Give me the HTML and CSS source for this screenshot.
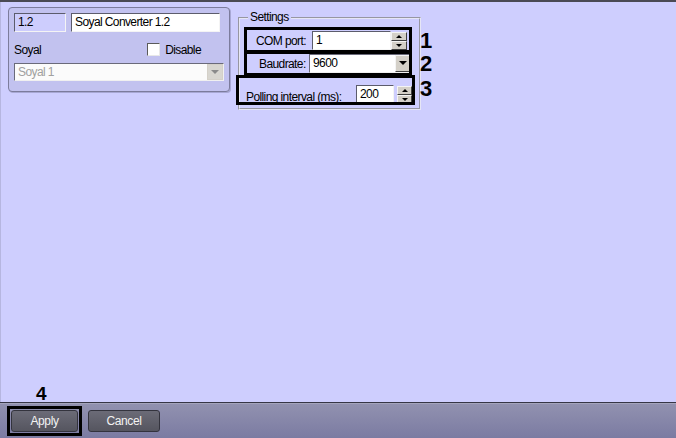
FILE: index.html
```html
<!DOCTYPE html>
<html>
<head>
<meta charset="utf-8">
<link rel="stylesheet" href="styles.css">
</head>
<body>
<div class="topbar"></div>
<div class="main">
  <div class="panel">
    <div class="row1">
      <div class="field id-field">1.2</div>
      <div class="field name-field">Soyal Converter 1.2</div>
    </div>
    <div class="row2">
      <span class="lbl">Soyal</span>
      <span class="chk"><span class="box"></span><span>Disable</span></span>
    </div>
    <div class="combo disabled"><span class="val">Soyal 1</span><span class="drop dis"></span></div>
  </div>

  <div class="settings">
    <fieldset class="group">
      <legend>Settings</legend>
      <div class="srow r-com">
        <span class="slbl">COM port:</span>
        <div class="field spinfield w-com">1</div>
        <div class="spin"><span class="up"></span><span class="dn"></span></div>
      </div>
      <div class="srow r-baud">
        <span class="slbl">Baudrate:</span>
        <div class="combo baud"><span class="val">9600</span><span class="drop"></span></div>
      </div>
      <div class="srow r-poll">
        <span class="slbl">Polling interval (ms):</span>
        <div class="field spinfield w-poll">200</div>
        <div class="spin spin-poll"><span class="up"></span><span class="dn"></span></div>
      </div>
    </fieldset>
    <div class="mark m1"></div>
    <div class="mark m2"></div>
    <div class="mark m3"></div>
    <div class="num n1">1</div>
    <div class="num n2">2</div>
    <div class="num n3">3</div>
  </div>
  <div class="num n4">4</div>
</div>
<div class="footer">
  <button class="btn btn-apply">Apply</button>
  <button class="btn btn-cancel">Cancel</button>
  <div class="mark m4"></div>
</div>
</body>
</html>
```
FILE: styles.css
```css
* { box-sizing: border-box; }
html, body { margin: 0; padding: 0; }
body {
  width: 676px;
  height: 438px;
  overflow: hidden;
  background: #cecefe;
  font-family: "Liberation Sans", Arial, sans-serif;
  font-size: 12px;
  letter-spacing: -0.6px;
  color: #000;
}
.topbar {
  height: 2px;
  background: #4a4a54;
}
.main {
  position: relative;
  height: 400px;
  display: flex;
  align-items: flex-start;
  padding: 5px 0 0 7px;
  gap: 8px;
  border-left: 1px solid #b6b6e0;
}
.panel {
  width: 222px;
  border: 1px solid #7c7c9c;
  border-radius: 4px;
  background: #c2c2ef;
  padding: 5px 5px 10px 5px;
  box-shadow: 1px 1px 0 #a8a8d4;
}
.row1 { display: flex; gap: 5px; }
.field {
  height: 19px;
  line-height: 17px;
  padding-left: 3px;
  border: 1px solid;
  border-color: #5c5c6c #f4f4f4 #f4f4f4 #5c5c6c;
  background: #fff;
  white-space: nowrap;
  overflow: hidden;
}
.id-field { width: 52px; background: #cdcdfd; }
.name-field { width: 149px; }
.row2 {
  display: flex;
  align-items: center;
  margin-top: 11px;
  height: 13px;
}
.chk {
  margin-left: auto;
  margin-right: 23px;
  display: flex;
  align-items: center;
  gap: 5px;
}
.box {
  width: 13px;
  height: 13px;
  background: #fff;
  border: 1px solid;
  border-color: #5a5a5a #e8e8e8 #e8e8e8 #5a5a5a;
}
.combo {
  display: flex;
  align-items: stretch;
  border: 1px solid;
  border-color: #6a6a7a #f0f0f0 #f0f0f0 #6a6a7a;
  background: #fff;
}
.combo .val { flex: 1; padding-left: 3px; }
.disabled {
  margin-top: 7px;
  height: 18px;
  line-height: 16px;
  background: #fbfbfb;
  color: #a0a0a0;
}
.drop {
  width: 16px;
  position: relative;
  background: #d4d0c8;
  border: 1px solid;
  border-color: #f4f4f4 #404040 #404040 #f4f4f4;
}
.drop::after {
  content: "";
  position: absolute;
  left: 3px;
  top: 5px;
  border-left: 4px solid transparent;
  border-right: 4px solid transparent;
  border-top: 4px solid #000;
}
.drop.dis { border-color: #d4d0c8; background: #d8d6d0; }
.drop.dis::after { border-top-color: #8a8a8a; }

.settings {
  position: relative;
  margin-top: 4px;
}
.group {
  margin: 0;
  width: 183px;
  padding: 0 0 4px 0;
  border: 2px groove #e6e6f6;
}
.group legend {
  margin-left: 8px;
  padding: 0 2px;
  line-height: 13px;
  font-size: 12px;
}
.srow { display: flex; align-items: center; }
.slbl { white-space: nowrap; }
.r-com { margin-top: 7px; height: 19px; padding-left: 16px; }
.r-com .slbl { width: 56px; }
.w-com { width: 79px; }
.spin {
  width: 16px;
  height: 18px;
  display: flex;
  flex-direction: column;
}
.spin span {
  flex: 1;
  position: relative;
  background: #d4d0c8;
  border: 1px solid;
  border-color: #f4f4f4 #404040 #404040 #f4f4f4;
}
.spin .up::after, .spin .dn::after {
  content: "";
  position: absolute;
  left: 4px;
  border-left: 3px solid transparent;
  border-right: 3px solid transparent;
}
.spin .up::after { top: 2px; border-bottom: 3px solid #000; }
.spin .dn::after { top: 2px; border-top: 3px solid #000; }

.r-baud { margin-top: 4px; height: 19px; padding-left: 19px; }
.r-baud .slbl { width: 50px; }
.baud { width: 103px; height: 19px; line-height: 17px; }

.r-poll { margin-top: 12px; height: 19px; padding-left: 6px; align-items: flex-end; }
.r-poll .slbl { width: 110px; line-height: 14px; }
.w-poll { width: 38px; }
.spin-poll { margin-left: 3px; width: 15px; }

.mark {
  position: absolute;
  border: 3px solid #000;
}
.m1 { left: 6px; top: 16px; width: 168px; height: 26px; }
.m2 { left: 6px; top: 40px; width: 168px; height: 25px; }
.m3 { left: -2px; top: 64px; width: 179px; height: 30px; }
.num {
  position: absolute;
  font-weight: bold;
  font-size: 22px;
  line-height: 22px;
  letter-spacing: 0;
}
.n1 { left: 182px; top: 19px; }
.n2 { left: 182px; top: 42px; }
.n3 { left: 182px; top: 67px; }
.n4 { left: 35px; top: 381px; font-size: 19px; }

.footer {
  position: relative;
  height: 36px;
  border-top: 1px solid #363646;
  box-shadow: inset 0 1px 0 #a4a4bc;
  background: linear-gradient(#9292b0, #7b7ba2);
  display: flex;
  gap: 10px;
  padding: 7px 0 0 11px;
}
.btn {
  height: 22px;
  border: 1px solid #33333d;
  border-radius: 3px;
  background: linear-gradient(#6b6b77, #55555f);
  color: #f2f2f2;
  font-family: "Liberation Sans", Arial, sans-serif;
  font-size: 12px;
  letter-spacing: -0.4px;
  padding: 0;
}
.btn-apply { width: 67px; }
.btn-cancel { width: 72px; }
.m4 { left: 7px; top: 3px; width: 75px; height: 30px; }
```
